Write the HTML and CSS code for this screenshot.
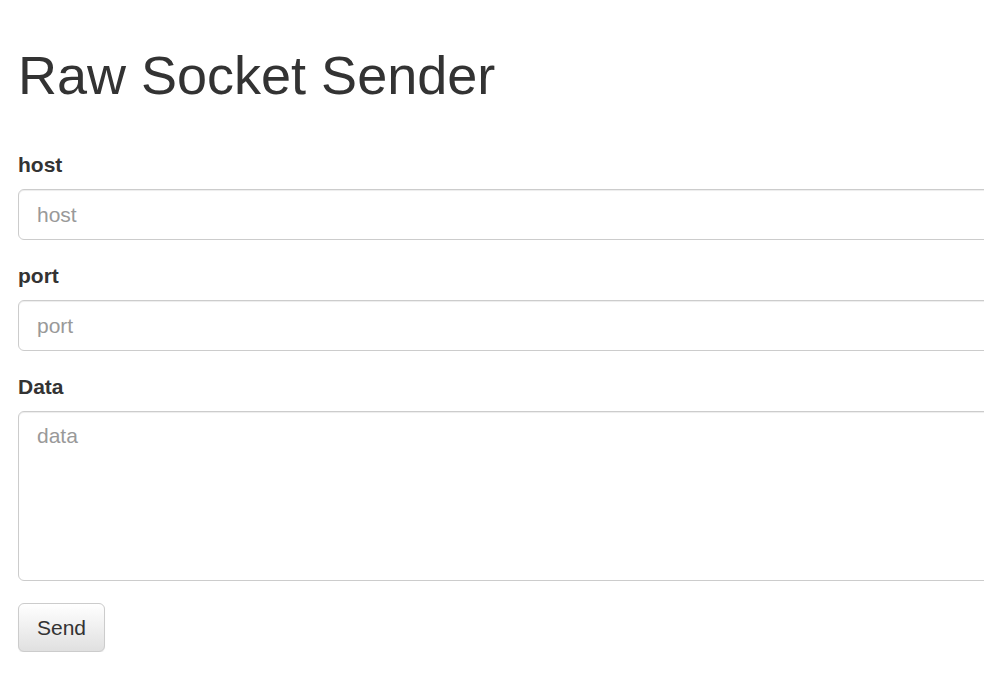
FILE: index.html
```html
<!DOCTYPE html>
<html lang="en">
<head>
  <meta charset="UTF-8">
  <meta name="viewport" content="width=device-width, initial-scale=1.0">
  <title>Raw Socket Sender</title>
  <link rel="stylesheet" href="styles.css">
</head>
<body>
  <div class="container">
    <h1>Raw Socket Sender</h1>
    <form class="sender-form">
      <div class="form-group">
        <label for="host">host</label>
        <input type="text" id="host" class="form-control" placeholder="host">
      </div>
      <div class="form-group">
        <label for="port">port</label>
        <input type="text" id="port" class="form-control" placeholder="port">
      </div>
      <div class="form-group">
        <label for="data">Data</label>
        <textarea id="data" class="form-control data-area" placeholder="data"></textarea>
      </div>
      <button type="button" class="btn">Send</button>
    </form>
  </div>
</body>
</html>
```

FILE: styles.css
```css
html, body {
  overflow: hidden;
}
body {
  font-family: 'Liberation Sans', Arial, sans-serif;
  color: #333;
  background-color: #fff;
  margin: 0;
  padding: 0;
}
.container {
  padding: 0 18px;
}
h1 {
  font-size: 54px;
  font-weight: 500;
  line-height: 1.1;
  margin: 46px 0 45px;
}
.form-group {
  margin-bottom: 21px;
}
label {
  display: block;
  font-size: 21px;
  font-weight: bold;
  line-height: 30px;
  margin-bottom: 9px;
}
.form-control {
  display: block;
  box-sizing: border-box;
  width: 1000px;
  height: 51px;
  padding: 0 18px;
  font-family: inherit;
  font-size: 21px;
  color: #555;
  background-color: #fff;
  border: 1px solid #ccc;
  border-radius: 6px;
  box-shadow: inset 0 1px 1px rgba(0, 0, 0, 0.075);
}
.form-control::placeholder {
  color: #999;
}
.data-area {
  height: 170px;
  padding: 9px 18px;
  line-height: 30px;
  resize: none;
}
.btn {
  display: block;
  height: 49px;
  padding: 0 18px;
  margin-top: 22px;
  font-family: inherit;
  font-size: 21px;
  color: #333;
  background-image: linear-gradient(to bottom, #fff 0, #e0e0e0 100%);
  border: 1px solid #ccc;
  border-radius: 6px;
  box-shadow: inset 0 1px 0 rgba(255, 255, 255, 0.15), 0 1px 1px rgba(0, 0, 0, 0.075);
  cursor: pointer;
}
```
